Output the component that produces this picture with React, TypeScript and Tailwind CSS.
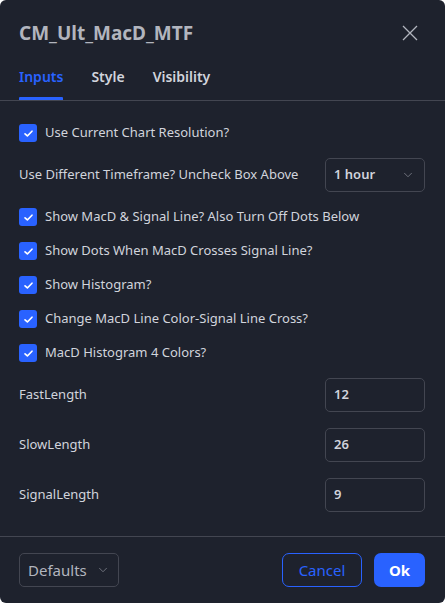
import { ChevronDown } from 'lucide-react'

const CHECKS_TOP = ['Use Current Chart Resolution?']
const CHECKS = [
  'Show MacD & Signal Line? Also Turn Off Dots Below',
  'Show Dots When MacD Crosses Signal Line?',
  'Show Histogram?',
  'Change MacD Line Color-Signal Line Cross?',
  'MacD Histogram 4 Colors?',
]
const NUMS = [
  { label: 'FastLength', value: '12' },
  { label: 'SlowLength', value: '26' },
  { label: 'SignalLength', value: '9' },
]

function Check({ label }: { label: string }) {
  return (
    <div className="flex h-[34px] items-center gap-[8px]">
      <span className="flex h-[18px] w-[18px] items-center justify-center rounded-[3px] bg-[#2962ff]">
        <svg viewBox="0 0 12 12" className="h-[11px] w-[11px]" fill="none">
          <path d="M2.2 6.3 4.8 8.7 9.8 3.5" stroke="white" strokeWidth="1.8" strokeLinecap="round" strokeLinejoin="round" />
        </svg>
      </span>
      <span>{label}</span>
    </div>
  )
}

export default function App() {
  return (
    <div
      className="flex h-[603px] w-[445px] flex-col overflow-hidden rounded-[6px] bg-[#1e222d] text-[13px] text-[#d1d4dc]"
      style={{ fontFamily: '"Noto Sans", "Open Sans", sans-serif' }}
    >
      <div className="flex items-center justify-between pl-[19px] pr-[20px] pt-[19px]">
        <h1 className="text-[19px] font-bold leading-[28px] text-[#b2b5be]">CM_Ult_MacD_MTF</h1>
        <svg viewBox="0 0 16 16" className="mr-[7px] h-[16px] w-[16px]" fill="none">
          <path d="M1 1 15 15M15 1 1 15" stroke="#b2b5be" strokeWidth="1.3" />
        </svg>
      </div>

      <div className="mt-[19px] flex gap-[28px] border-b border-[#434651] px-[19px] text-[14px] font-semibold">
        <div className="flex flex-col">
          <span className="leading-[22px] text-[#2962ff]">Inputs</span>
          <span className="mt-[9px] h-[3px] rounded-t-[1px] bg-[#2962ff]" />
        </div>
        <span className="leading-[22px]">Style</span>
        <span className="leading-[22px]">Visibility</span>
      </div>

      <div className="flex-1 pl-[19px] pr-[20px] pt-[15px]">
        {CHECKS_TOP.map((c) => (
          <Check key={c} label={c} />
        ))}
        <div className="flex h-[50px] items-center justify-between">
          <span>Use Different Timeframe? Uncheck Box Above</span>
          <div className="flex h-[34px] w-[100px] items-center justify-between rounded-[5px] border border-[#434651] pl-[8px] pr-[9px]">
            <span className="font-semibold text-[#d1d4dc]">1 hour</span>
            <ChevronDown className="h-[14px] w-[14px] text-[#787b86]" strokeWidth={1.5} />
          </div>
        </div>
        {CHECKS.map((c) => (
          <Check key={c} label={c} />
        ))}
        <div className="flex flex-col">
          {NUMS.map((n) => (
            <div key={n.label} className="flex h-[50px] items-center justify-between">
              <span>{n.label}</span>
              <div className="flex h-[34px] w-[100px] items-center rounded-[5px] border border-[#434651] px-[8px] font-semibold">
                {n.value}
              </div>
            </div>
          ))}
        </div>
      </div>

      <div className="flex items-center justify-between border-t border-[#434651] pb-[16px] pl-[19px] pr-[20px] pt-[16px]">
        <div className="flex h-[34px] w-[100px] items-center justify-between rounded-[5px] border border-[#434651] pl-[8px] pr-[8px] text-[15px] text-[#b2b5be]">
          <span>Defaults</span>
          <ChevronDown className="h-[14px] w-[14px] text-[#787b86]" strokeWidth={1.5} />
        </div>
        <div className="flex gap-[12px]">
          <button className="h-[34px] w-[80px] rounded-[7px] border border-[#2962ff] text-[15px] text-[#2962ff]">
            Cancel
          </button>
          <button className="h-[34px] w-[51px] rounded-[7px] bg-[#2962ff] text-[15px] font-bold text-white">
            Ok
          </button>
        </div>
      </div>
    </div>
  )
}
